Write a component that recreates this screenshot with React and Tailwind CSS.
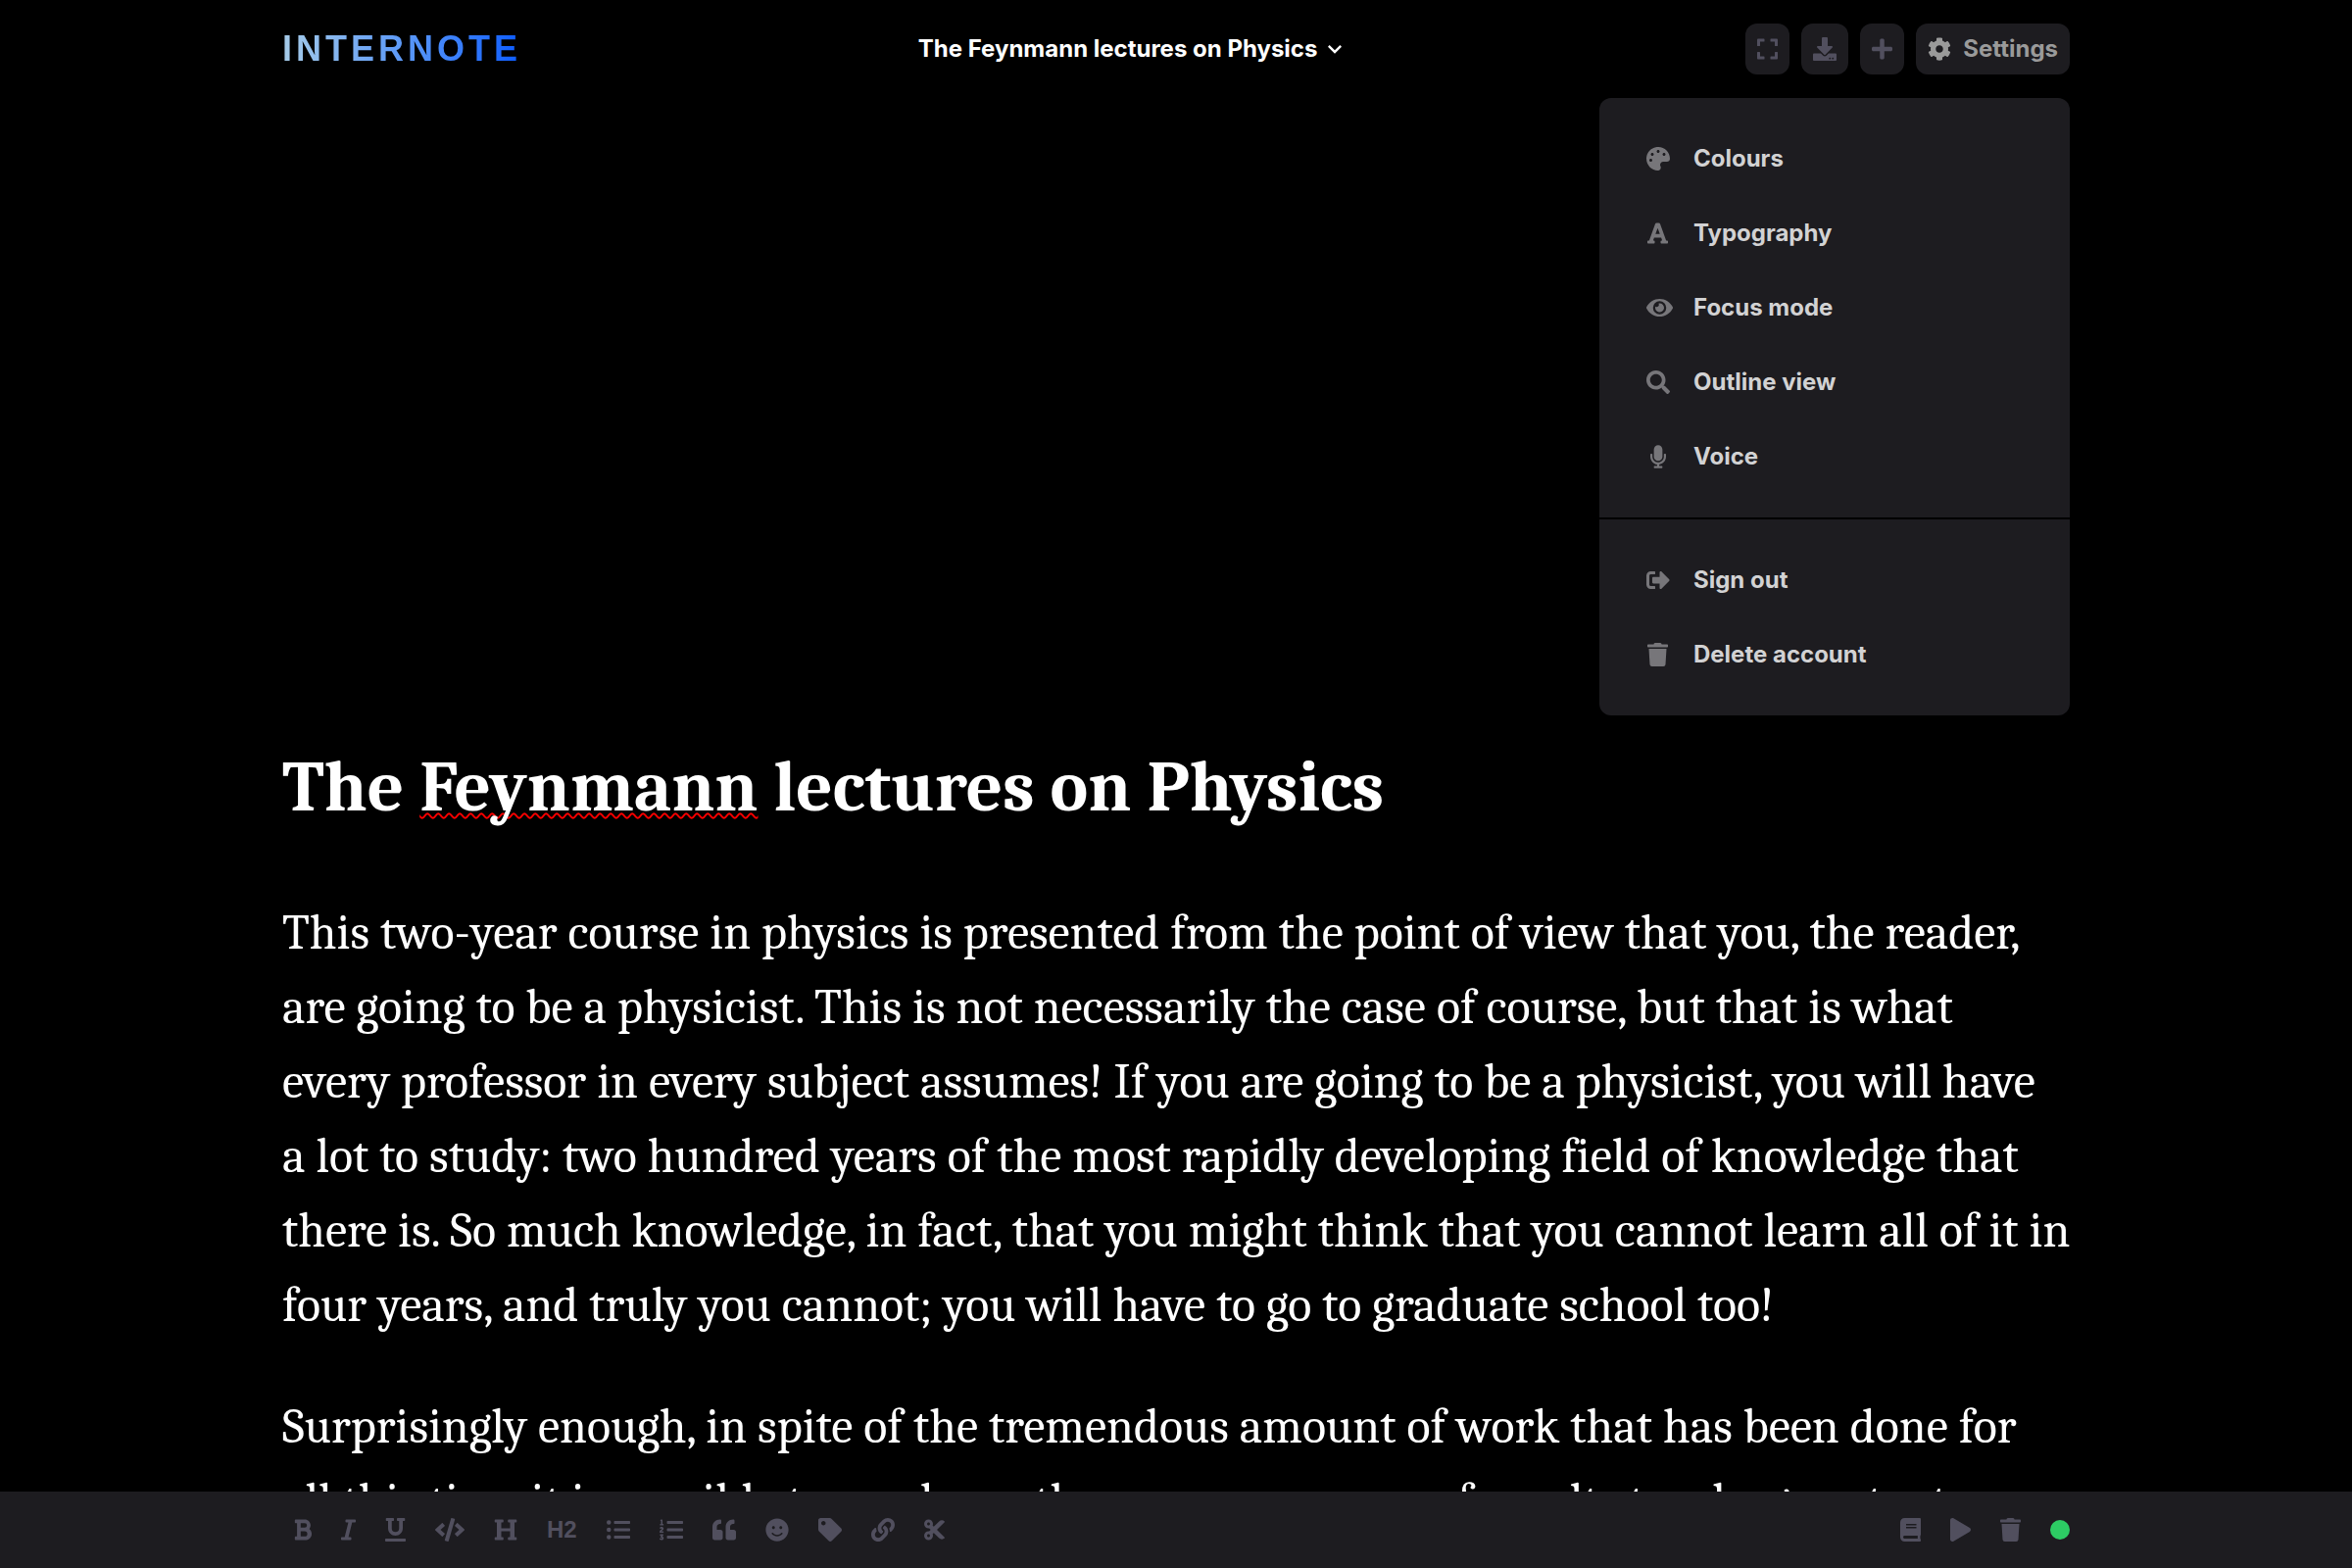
import { FaExpand, FaDownload, FaPlus, FaPalette, FaFont, FaEye, FaSearch, FaMicrophone, FaSignOutAlt, FaTrash, FaBold, FaItalic, FaUnderline, FaCode, FaHeading, FaListUl, FaListOl, FaQuoteLeft, FaSmile, FaTag, FaLink, FaCut, FaBook, FaPlay, FaCog } from "react-icons/fa";
import { MdKeyboardArrowDown } from "react-icons/md";

const preferences = [
  { label: "Colours", Icon: FaPalette, width: "w-6" },
  { label: "Typography", Icon: FaFont, width: "w-[21px]" },
  { label: "Focus mode", Icon: FaEye, width: "w-[27px]" },
  { label: "Outline view", Icon: FaSearch, width: "w-6" },
  { label: "Voice", Icon: FaMicrophone, width: "w-4" },
];

const account = [
  { label: "Sign out", Icon: FaSignOutAlt, width: "w-6" },
  { label: "Delete account", Icon: FaTrash, width: "w-[21px]" },
];

const formatting = [
  { label: "Bold", Icon: FaBold, width: "w-[18px]" },
  { label: "Italic", Icon: FaItalic, width: "w-[15px]" },
  { label: "Underline", Icon: FaUnderline, width: "w-[21px]" },
  { label: "Code", Icon: FaCode, width: "w-[30px]" },
  { label: "Heading 1", Icon: FaHeading, width: "w-6" },
  { label: "Heading 2", text: "H2" },
  { label: "Bulleted list", Icon: FaListUl, width: "w-6" },
  { label: "Numbered list", Icon: FaListOl, width: "w-6" },
  { label: "Quote", Icon: FaQuoteLeft, width: "w-6" },
  { label: "Emoji", Icon: FaSmile, width: "w-6" },
  { label: "Tag", Icon: FaTag, width: "w-6" },
  { label: "Link", Icon: FaLink, width: "w-6" },
  { label: "Cut", Icon: FaCut, width: "w-[21px]" },
];

const noteActions = [
  { label: "Dictionary", Icon: FaBook, width: "w-[21px]" },
  { label: "Play", Icon: FaPlay, width: "w-[21px]" },
  { label: "Delete note", Icon: FaTrash, width: "w-[21px]" },
];

function HeaderButton({ label, children }) {
  return (
    <button type="button" aria-label={label} className="flex h-13 items-center rounded-xl bg-[#1d1c20] px-3 text-[#514f5e]">
      {children}
    </button>
  );
}

function MenuItem({ label, Icon, width }) {
  return (
    <button type="button" role="menuitem" className="flex h-19 w-full items-center px-12 text-left text-2xl font-bold text-[#d2d2d3]">
      <span className="flex w-6 shrink-0 justify-center-safe text-[#77767a]">
        <Icon className={"h-6 shrink-0 " + width} />
      </span>
      <span className="ml-6">{label}</span>
    </button>
  );
}

function ToolButton({ label, Icon, width, text }) {
  return (
    <button type="button" aria-label={label} className="flex h-8 items-center justify-center font-['Liberation_Sans',sans-serif] text-2xl font-bold text-[#514f5e]">
      {Icon ? <Icon className={"h-6 " + width} /> : text}
    </button>
  );
}

export default function App() {
  return (
    <div className="flex h-screen flex-col overflow-hidden bg-black font-['Inter',sans-serif] text-white">
      <header className="relative z-10 mx-auto flex w-full max-w-[1824px] shrink-0 items-center justify-between py-6">
        <a href="#home" className="bg-linear-to-r from-[#a6cbe8] to-[#0a5bff] bg-clip-text font-['Liberation_Sans',sans-serif] text-4xl font-bold tracking-[4px] text-transparent">
          INTERNOTE
        </a>
        <button type="button" className="flex items-center gap-1 text-2xl font-bold">
          The Feynmann lectures on Physics
          <MdKeyboardArrowDown className="size-7" />
        </button>
        <div className="relative flex items-center gap-3">
          <HeaderButton label="Fullscreen"><FaExpand className="h-6 w-[21px]" /></HeaderButton>
          <HeaderButton label="Download"><FaDownload className="size-6" /></HeaderButton>
          <HeaderButton label="New note"><FaPlus className="h-6 w-[21px]" /></HeaderButton>
          <button type="button" aria-expanded="true" className="flex h-13 items-center gap-3 rounded-xl bg-[#1d1c20] px-3 text-2xl font-bold text-[#9a9a9a]">
            <FaCog className="size-6" />
            Settings
          </button>
          <div role="menu" className="absolute top-full right-0 mt-6 w-120 overflow-hidden rounded-xl bg-[#1d1c20]">
            <div className="border-b-2 border-black py-6">
              {preferences.map((item) => <MenuItem key={item.label} {...item} />)}
            </div>
            <div className="py-6">
              {account.map((item) => <MenuItem key={item.label} {...item} />)}
            </div>
          </div>
        </div>
      </header>
      <main className="min-h-0 w-full flex-1 overflow-hidden">
        <article className="mx-auto max-w-[1824px] pt-[640px] font-['Cambria','Caladea',serif] text-[50px]">
          <h1 className="mb-12 text-[73px] leading-[126px] font-bold">
            The <span className="underline decoration-[#ff0000] decoration-wavy decoration-2 underline-offset-2 [text-decoration-skip-ink:none]">Feynmann</span> lectures on Physics
          </h1>
          <p className="-mr-2 mb-12 leading-[76px]">
            This two-year course in physics is presented from the point of view that you, the reader, are going to be a physicist. This is not necessarily the case of course, but that is what every&nbsp;professor in every subject assumes! If you are going to be a physicist, you will have a&nbsp;lot to study: two hundred years of the most rapidly developing field of knowledge that there is. So much knowledge, in fact, that you might think that you cannot learn all of it in four years, and truly you cannot; you will have to go to graduate school too!
          </p>
          <p className="leading-[76px]">
            Surprisingly enough, in spite of the tremendous amount of work that has been done for all this time it is possible to condense the enormous mass of results to a large extent
          </p>
        </article>
      </main>
      <footer className="shrink-0 bg-[#1d1c20]">
        <div className="mx-auto flex h-[78px] max-w-[1824px] items-center justify-between">
          <div className="flex items-center gap-[30px] pl-3">
            {formatting.map((item) => <ToolButton key={item.label} {...item} />)}
          </div>
          <div className="flex items-center gap-[30px]">
            {noteActions.map((item) => <ToolButton key={item.label} {...item} />)}
            <span role="status" aria-label="Saved" className="size-5 rounded-full bg-[#2dcc64]" />
          </div>
        </div>
      </footer>
    </div>
  );
}
